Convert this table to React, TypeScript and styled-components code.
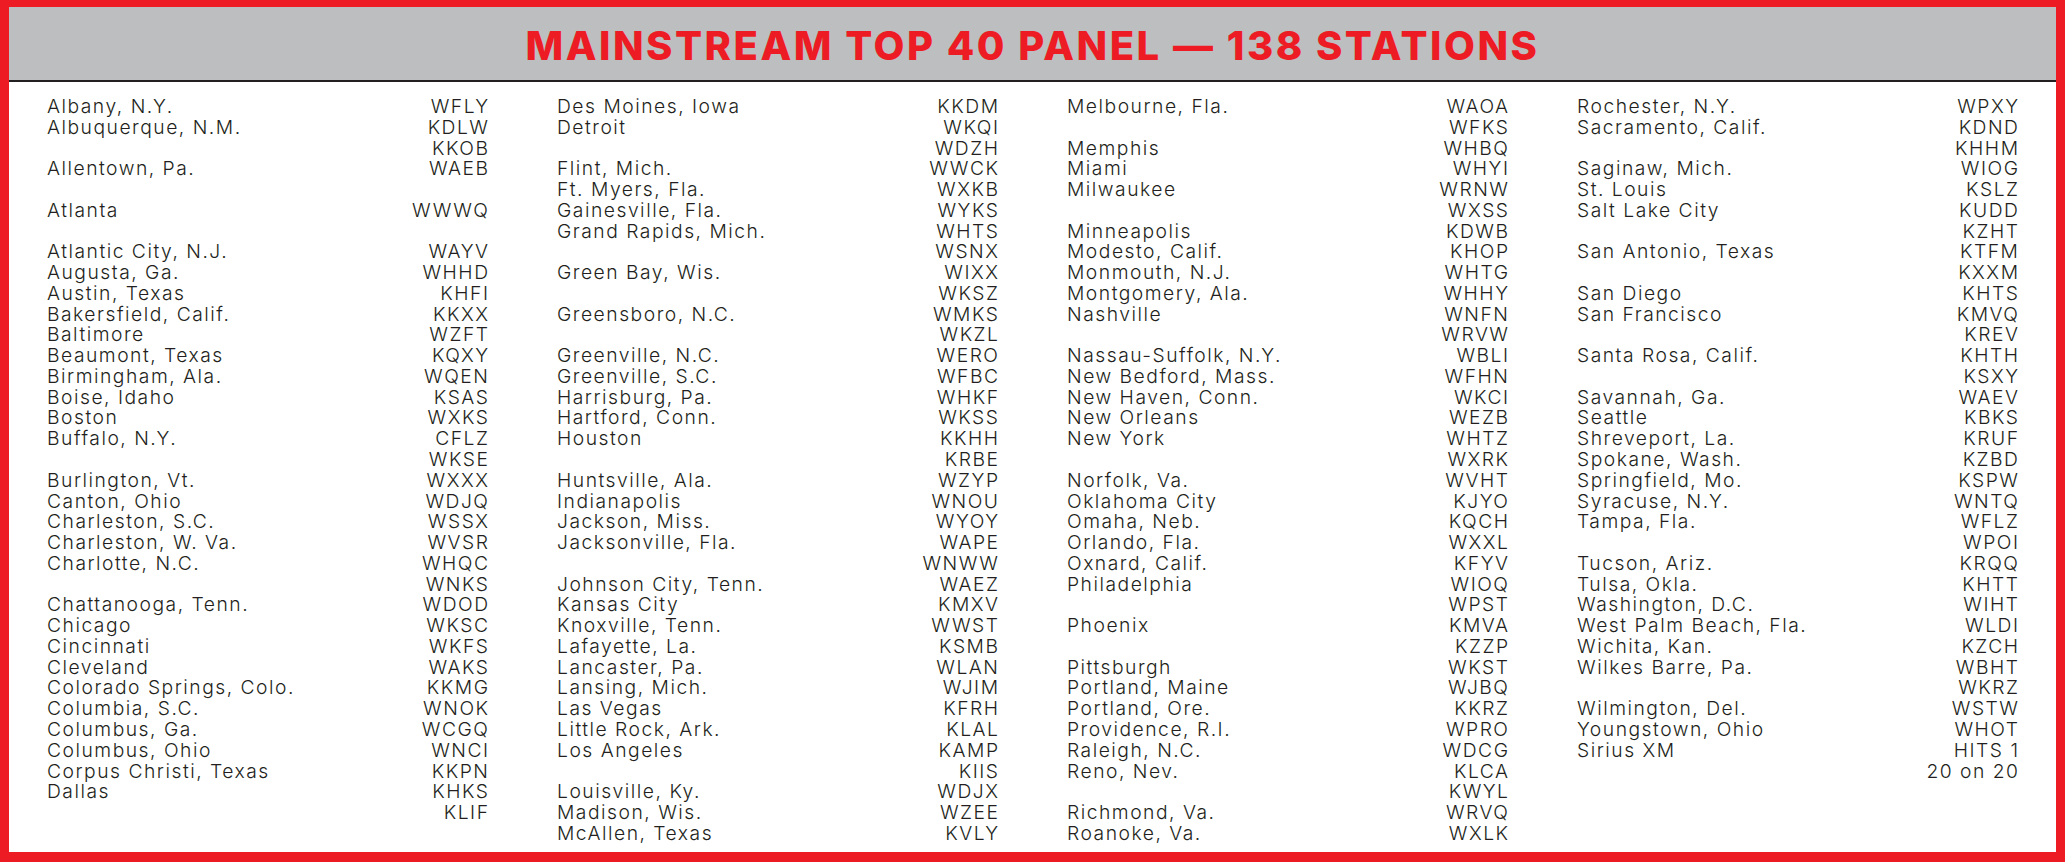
import React from "react";
import styled, { createGlobalStyle } from "styled-components";

const Global = createGlobalStyle`
  html, body { margin: 0; padding: 0; background: #ffffff; }
  body { width: 2065px; height: 862px; overflow: hidden; }
`;

type Row = [string, string];

const col1: Row[] = [
  ["Albany, N.Y.", "WFLY"],
  ["Albuquerque, N.M.", "KDLW"],
  ["", "KKOB"],
  ["Allentown, Pa.", "WAEB"],
  ["", ""],
  ["Atlanta", "WWWQ"],
  ["", ""],
  ["Atlantic City, N.J.", "WAYV"],
  ["Augusta, Ga.", "WHHD"],
  ["Austin, Texas", "KHFI"],
  ["Bakersfield, Calif.", "KKXX"],
  ["Baltimore", "WZFT"],
  ["Beaumont, Texas", "KQXY"],
  ["Birmingham, Ala.", "WQEN"],
  ["Boise, Idaho", "KSAS"],
  ["Boston", "WXKS"],
  ["Buffalo, N.Y.", "CFLZ"],
  ["", "WKSE"],
  ["Burlington, Vt.", "WXXX"],
  ["Canton, Ohio", "WDJQ"],
  ["Charleston, S.C.", "WSSX"],
  ["Charleston, W. Va.", "WVSR"],
  ["Charlotte, N.C.", "WHQC"],
  ["", "WNKS"],
  ["Chattanooga, Tenn.", "WDOD"],
  ["Chicago", "WKSC"],
  ["Cincinnati", "WKFS"],
  ["Cleveland", "WAKS"],
  ["Colorado Springs, Colo.", "KKMG"],
  ["Columbia, S.C.", "WNOK"],
  ["Columbus, Ga.", "WCGQ"],
  ["Columbus, Ohio", "WNCI"],
  ["Corpus Christi, Texas", "KKPN"],
  ["Dallas", "KHKS"],
  ["", "KLIF"],
];

const col2: Row[] = [
  ["Des Moines, Iowa", "KKDM"],
  ["Detroit", "WKQI"],
  ["", "WDZH"],
  ["Flint, Mich.", "WWCK"],
  ["Ft. Myers, Fla.", "WXKB"],
  ["Gainesville, Fla.", "WYKS"],
  ["Grand Rapids, Mich.", "WHTS"],
  ["", "WSNX"],
  ["Green Bay, Wis.", "WIXX"],
  ["", "WKSZ"],
  ["Greensboro, N.C.", "WMKS"],
  ["", "WKZL"],
  ["Greenville, N.C.", "WERO"],
  ["Greenville, S.C.", "WFBC"],
  ["Harrisburg, Pa.", "WHKF"],
  ["Hartford, Conn.", "WKSS"],
  ["Houston", "KKHH"],
  ["", "KRBE"],
  ["Huntsville, Ala.", "WZYP"],
  ["Indianapolis", "WNOU"],
  ["Jackson, Miss.", "WYOY"],
  ["Jacksonville, Fla.", "WAPE"],
  ["", "WNWW"],
  ["Johnson City, Tenn.", "WAEZ"],
  ["Kansas City", "KMXV"],
  ["Knoxville, Tenn.", "WWST"],
  ["Lafayette, La.", "KSMB"],
  ["Lancaster, Pa.", "WLAN"],
  ["Lansing, Mich.", "WJIM"],
  ["Las Vegas", "KFRH"],
  ["Little Rock, Ark.", "KLAL"],
  ["Los Angeles", "KAMP"],
  ["", "KIIS"],
  ["Louisville, Ky.", "WDJX"],
  ["Madison, Wis.", "WZEE"],
  ["McAllen, Texas", "KVLY"],
];

const col3: Row[] = [
  ["Melbourne, Fla.", "WAOA"],
  ["", "WFKS"],
  ["Memphis", "WHBQ"],
  ["Miami", "WHYI"],
  ["Milwaukee", "WRNW"],
  ["", "WXSS"],
  ["Minneapolis", "KDWB"],
  ["Modesto, Calif.", "KHOP"],
  ["Monmouth, N.J.", "WHTG"],
  ["Montgomery, Ala.", "WHHY"],
  ["Nashville", "WNFN"],
  ["", "WRVW"],
  ["Nassau-Suffolk, N.Y.", "WBLI"],
  ["New Bedford, Mass.", "WFHN"],
  ["New Haven, Conn.", "WKCI"],
  ["New Orleans", "WEZB"],
  ["New York", "WHTZ"],
  ["", "WXRK"],
  ["Norfolk, Va.", "WVHT"],
  ["Oklahoma City", "KJYO"],
  ["Omaha, Neb.", "KQCH"],
  ["Orlando, Fla.", "WXXL"],
  ["Oxnard, Calif.", "KFYV"],
  ["Philadelphia", "WIOQ"],
  ["", "WPST"],
  ["Phoenix", "KMVA"],
  ["", "KZZP"],
  ["Pittsburgh", "WKST"],
  ["Portland, Maine", "WJBQ"],
  ["Portland, Ore.", "KKRZ"],
  ["Providence, R.I.", "WPRO"],
  ["Raleigh, N.C.", "WDCG"],
  ["Reno, Nev.", "KLCA"],
  ["", "KWYL"],
  ["Richmond, Va.", "WRVQ"],
  ["Roanoke, Va.", "WXLK"],
];

const col4: Row[] = [
  ["Rochester, N.Y.", "WPXY"],
  ["Sacramento, Calif.", "KDND"],
  ["", "KHHM"],
  ["Saginaw, Mich.", "WIOG"],
  ["St. Louis", "KSLZ"],
  ["Salt Lake City", "KUDD"],
  ["", "KZHT"],
  ["San Antonio, Texas", "KTFM"],
  ["", "KXXM"],
  ["San Diego", "KHTS"],
  ["San Francisco", "KMVQ"],
  ["", "KREV"],
  ["Santa Rosa, Calif.", "KHTH"],
  ["", "KSXY"],
  ["Savannah, Ga.", "WAEV"],
  ["Seattle", "KBKS"],
  ["Shreveport, La.", "KRUF"],
  ["Spokane, Wash.", "KZBD"],
  ["Springfield, Mo.", "KSPW"],
  ["Syracuse, N.Y.", "WNTQ"],
  ["Tampa, Fla.", "WFLZ"],
  ["", "WPOI"],
  ["Tucson, Ariz.", "KRQQ"],
  ["Tulsa, Okla.", "KHTT"],
  ["Washington, D.C.", "WIHT"],
  ["West Palm Beach, Fla.", "WLDI"],
  ["Wichita, Kan.", "KZCH"],
  ["Wilkes Barre, Pa.", "WBHT"],
  ["", "WKRZ"],
  ["Wilmington, Del.", "WSTW"],
  ["Youngstown, Ohio", "WHOT"],
  ["Sirius XM", "HITS 1"],
  ["", "20 on 20"],
];

const columns = [col1, col2, col3, col4];

const Frame = styled.div`
  box-sizing: border-box;
  width: 2065px;
  height: 862px;
  border-style: solid;
  border-color: #ed1c24;
  border-width: 7px 9px 10px 9px;
  background: #ffffff;
  display: flex;
  flex-direction: column;
`;

const Header = styled.header`
  height: 75px;
  background: #bcbec0;
  border-bottom: 2px solid #231f20;
  display: flex;
  align-items: center;
  justify-content: center;
  padding-top: 4px;
  box-sizing: border-box;
`;

const Title = styled.h1`
  margin: 0;
  font-family: "Inter", "Open Sans", sans-serif;
  font-weight: 800;
  font-size: 40px;
  line-height: 1;
  color: #ed1c24;
  letter-spacing: 2.5px;
  white-space: nowrap;
`;

const Body = styled.main`
  flex: 1;
  display: grid;
  grid-template-columns: repeat(4, 1fr);
  column-gap: 69px;
  padding: 14px 38px 0 38px;
  align-items: start;
`;

const Column = styled.div`
  display: flex;
  flex-direction: column;
`;

const Line = styled.div`
  display: grid;
  grid-template-columns: 1fr auto;
  height: 20.78px;
  line-height: 20.78px;
  font-family: "Inter", "Lato", sans-serif;
  font-size: 19.3px;
  font-weight: 300;
  letter-spacing: 1.5px;
  color: #231f20;
  white-space: nowrap;
`;

const City = styled.span``;

const Call = styled.span`
  text-align: right;
  margin-right: -1.5px;
`;

export default function App() {
  return (
    <>
      <Global />
      <Frame>
        <Header>
          <Title>MAINSTREAM TOP 40 PANEL — 138 STATIONS</Title>
        </Header>
        <Body>
          {columns.map((col, ci) => (
            <Column key={ci}>
              {col.map(([city, call], ri) => (
                <Line key={ri}>
                  <City>{city}</City>
                  <Call>{call}</Call>
                </Line>
              ))}
            </Column>
          ))}
        </Body>
      </Frame>
    </>
  );
}
